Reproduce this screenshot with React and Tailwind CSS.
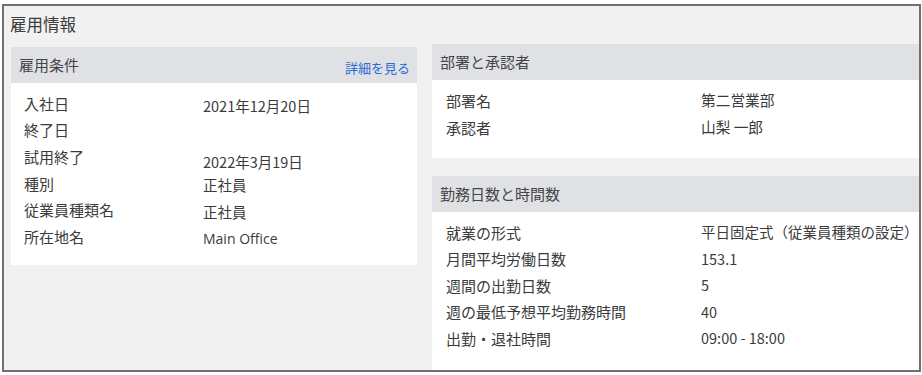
import React from "react";

const FONT = { fontFamily: '"Noto Sans CJK JP", "Noto Sans", sans-serif' };

const employment = [
  { label: "入社日", value: "2021年12月20日" },
  { label: "終了日", value: "" },
  { label: "試用終了", value: "2022年3月19日", drop: true },
  { label: "種別", value: "正社員" },
  { label: "従業員種類名", value: "正社員" },
  { label: "所在地名", value: "Main Office", latin: true },
];

const department = [
  { label: "部署名", value: "第二営業部" },
  { label: "承認者", value: "山梨 一郎" },
];

const workdays = [
  { label: "就業の形式", value: "平日固定式（従業員種類の設定）" },
  { label: "月間平均労働日数", value: "153.1" },
  { label: "週間の出勤日数", value: "5" },
  { label: "週の最低予想平均勤務時間", value: "40" },
  { label: "出勤・退社時間", value: "09:00 - 18:00" },
];

const CardHeader = ({ title, link }) => (
  <div className="h-[36px] bg-[#e0e1e4] flex items-center justify-between pl-[8px] pr-[7px]">
    <span className="text-[15px] text-[#454545] leading-none -mt-[2px]">{title}</span>
    {link && (
      <span className="text-[13px] text-[#2b6cd4] leading-none mt-[4px] cursor-pointer">
        {link}
      </span>
    )}
  </div>
);

const App = () => {
  return (
    <div className="w-[922px] h-[375px] bg-white pt-[4px] pl-[2px]" style={FONT}>
      <div className="w-[919px] h-[368px] border-2 border-[#707070] bg-[#f1f1f1] flex flex-col overflow-hidden">
        <div className="h-[38px] pl-[6px] pt-[10px] text-[16.5px] leading-none text-[#3c3c3c]">
          雇用情報
        </div>
        <div className="flex flex-1 min-h-0 pl-[7px] gap-[15px]">
          {/* left column */}
          <div className="w-[406px] mt-[3px]">
            <CardHeader title="雇用条件" link="詳細を見る" />
            <div className="bg-white h-[182px] pt-[7px] pl-[13px] text-[#3b3b3b]">
              {employment.map((row) => (
                <div key={row.label} className="grid grid-cols-[179px_1fr] h-[26.6px] items-center">
                  <span className="leading-none text-[15px]">{row.label}</span>
                  <span
                    className={`leading-none text-[14.5px] ${row.drop ? "pt-[11px]" : "pt-[5px]"} ${
                      row.latin ? "text-[#3a3a44]" : ""
                    }`}
                    style={row.latin ? { fontFamily: '"Open Sans", "Noto Sans", sans-serif', fontSize: 14 } : undefined}
                  >
                    {row.value}
                  </span>
                </div>
              ))}
            </div>
          </div>

          {/* right column */}
          <div className="flex-1 flex flex-col">
            <div>
              <CardHeader title="部署と承認者" />
              <div className="bg-white h-[78px] pt-[7px] pl-[14px] text-[#3b3b3b]">
                {department.map((row) => (
                  <div key={row.label} className="grid grid-cols-[255px_1fr] h-[27px] items-center">
                    <span className="leading-none text-[15px]">{row.label}</span>
                    <span className="leading-none text-[14.7px]">{row.value}</span>
                  </div>
                ))}
              </div>
            </div>
            <div className="mt-[18px] flex-1 flex flex-col">
              <CardHeader title="勤務日数と時間数" />
              <div className="bg-white flex-1 pt-[7px] pl-[14px] text-[#3b3b3b]">
                {workdays.map((row) => (
                  <div key={row.label} className="grid grid-cols-[255px_1fr] h-[26.5px] items-center">
                    <span className="leading-none text-[15px]">{row.label}</span>
                    <span className="leading-none text-[14.5px] whitespace-nowrap">{row.value}</span>
                  </div>
                ))}
              </div>
            </div>
          </div>
        </div>
      </div>
    </div>
  );
};

export default App;
